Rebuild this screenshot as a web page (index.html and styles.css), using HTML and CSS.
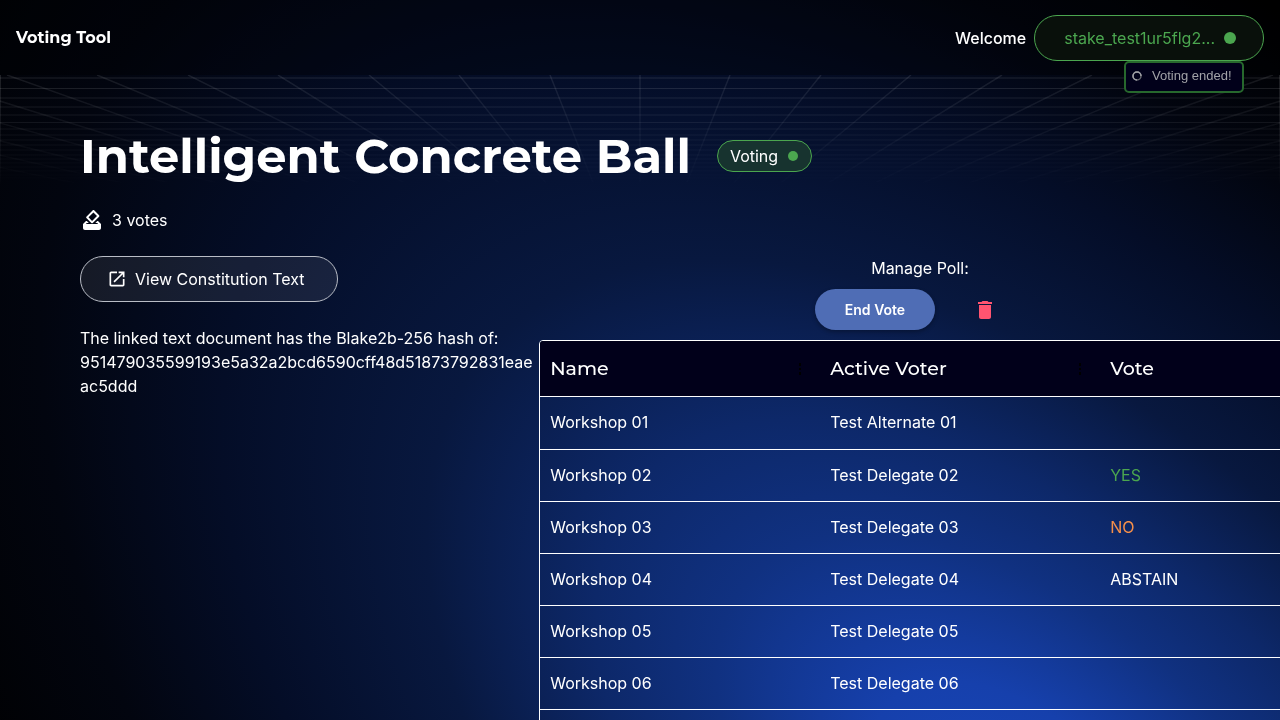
FILE: index.html
```html
<!DOCTYPE html>
<html lang="en">
<head>
<meta charset="utf-8">
<title>Voting Tool</title>
<link rel="stylesheet" href="styles.css">
</head>
<body>
<svg class="glow" viewBox="0 0 1280 720" preserveAspectRatio="none" aria-hidden="true">
  <defs>
    <radialGradient id="glow" gradientUnits="userSpaceOnUse" cx="0" cy="0" r="1" gradientTransform="translate(1030 830) rotate(-138) scale(1450 810)">
      <stop offset="0" stop-color="#1847bc"/>
      <stop offset=".13" stop-color="#1640ac"/>
      <stop offset=".26" stop-color="#103181"/>
      <stop offset=".36" stop-color="#0d2869"/>
      <stop offset=".5" stop-color="#08183f"/>
      <stop offset=".67" stop-color="#040d27"/>
      <stop offset=".82" stop-color="#02050f"/>
      <stop offset="1" stop-color="#000"/>
    </radialGradient>
  </defs>
  <rect width="1280" height="720" fill="url(#glow)"/>
</svg>
<header class="topbar">
  <a class="brand" href="#">Voting Tool</a>
  <div class="account">
    <span class="welcome">Welcome</span>
    <button class="wallet" type="button">stake_test1ur5flg2...<span class="dot dot-large"></span></button>
    <div class="toast" role="status">
      <svg width="10" height="10" viewBox="0 0 10 10" aria-hidden="true"><circle cx="5" cy="5" r="4" fill="none" stroke="#66666e" stroke-width="1.500"/><path d="M5 9A4 4 0 1 1 9 5" fill="none" stroke="#a0a0a6" stroke-width="1.500"/></svg>
      <span>Voting ended!</span>
    </div>
  </div>
</header>
<div class="canvas">
  <svg class="grid" viewBox="0 0 1280 115" preserveAspectRatio="none" aria-hidden="true">
    <defs>
      <linearGradient id="fade" x1="0" y1="0" x2="0" y2="1"><stop offset="0" stop-color="#fff"/><stop offset="1" stop-color="#000"/></linearGradient>
      <mask id="fadeMask"><rect width="1280" height="115" fill="url(#fade)"/></mask>
    </defs>
    <g mask="url(#fadeMask)" fill="none" stroke="#fff" stroke-opacity=".09">
      <path stroke-opacity=".12" d="M0 3H1280M0 13.500H1280M0 23H1280M0 32H1280M0 40H1280M0 47.500H1280M0 54H1280M0 60H1280M0 65H1280M0 70H1280M0 75H1280M0 80H1280M0 84H1280M0 88H1280M0 92H1280M0 96H1280M0 100H1280M0 103H1280M0 106H1280M.5 0V115M1279.500 0V115"/>
      <path stroke-width="1.500" d="M640 0V115M550 0L640 225L730 0M459 0L640 225L821 0M369 0L640 225L911 0M278 0L640 225L1002 0M188 0L640 225L1092 0M97 0L640 225L1183 0M7 0L640 225L1273 0M-84 0L640 225L1364 0M-174 0L640 225L1454 0M-265 0L640 225L1545 0M-355 0L640 225L1635 0M-446 0L640 225L1726 0"/>
    </g>
  </svg>
  <main class="page">
    <div class="heading">
      <h1>Intelligent Concrete Ball</h1>
      <span class="chip">Voting<span class="dot"></span></span>
    </div>
    <div class="votes">
      <svg width="24" height="24" viewBox="0 0 24 24" fill="#fff" aria-hidden="true"><path d="M18 13h-.68l-2 2h1.910L19 17H5l1.780-2h2.050l-2-2H6l-3 3v4c0 1.100.89 2 1.990 2H19c1.100 0 2-.89 2-2v-4l-3-3zm-1-5.050l-4.950 4.950-3.540-3.540 4.950-4.950L17 7.950zm-4.240-5.660L6.390 8.660c-.39.39-.39 1.020 0 1.410l4.950 4.950c.39.39 1.020.39 1.410 0l6.360-6.360c.39-.39.39-1.020 0-1.410L14.160 2.300c-.38-.4-1.010-.4-1.400-.01z"/><path d="M3 16h18v4H3z"/></svg>
      <span>3 votes</span>
    </div>
    <div class="columns">
      <section class="document">
        <button class="outlined" type="button">
          <svg width="20" height="20" viewBox="0 0 24 24" fill="#fff" aria-hidden="true"><path d="M19 19H5V5h7V3H5c-1.110 0-2 .9-2 2v14c0 1.100.89 2 2 2h14c1.100 0 2-.9 2-2v-7h-2v7zM14 3v2h3.590l-9.830 9.830 1.410 1.410L19 6.410V10h2V3h-7z"/></svg>
          View Constitution Text
        </button>
        <p class="hash">The linked text document has the Blake2b-256 hash of:<br>951479035599193e5a32a2bcd6590cff48d51873792831eae<br>ac5ddd</p>
      </section>
      <section class="poll">
        <p class="manage">Manage Poll:</p>
        <div class="actions">
          <button class="end" type="button">End Vote</button>
          <button class="delete" type="button" aria-label="Delete poll"><svg width="24" height="24" viewBox="0 0 24 24" fill="#ff5470" aria-hidden="true"><path d="M6 19c0 1.100.9 2 2 2h8c1.100 0 2-.9 2-2V7H6v12zM19 4h-3.500l-1-1h-5l-1 1H5v2h14V4z"/></svg></button>
        </div>
        <table class="voters">
          <thead><tr>
            <th><div class="th">Name<svg width="24" height="24" viewBox="0 0 24 24" aria-hidden="true"><path d="M11 6h2v3h-2zM11 11h2v2h-2zM11 15h2v3h-2z"/></svg></div></th>
            <th><div class="th">Active Voter<svg width="24" height="24" viewBox="0 0 24 24" aria-hidden="true"><path d="M11 6h2v3h-2zM11 11h2v2h-2zM11 15h2v3h-2z"/></svg></div></th>
            <th><div class="th">Vote</div></th>
          </tr></thead>
          <tbody>
            <tr><td>Workshop 01</td><td>Test Alternate 01</td><td></td></tr>
            <tr><td>Workshop 02</td><td>Test Delegate 02</td><td class="yes">YES</td></tr>
            <tr><td>Workshop 03</td><td>Test Delegate 03</td><td class="no">NO</td></tr>
            <tr><td>Workshop 04</td><td>Test Delegate 04</td><td>ABSTAIN</td></tr>
            <tr><td>Workshop 05</td><td>Test Delegate 05</td><td></td></tr>
            <tr><td>Workshop 06</td><td>Test Delegate 06</td><td></td></tr>
            <tr><td></td><td></td><td></td></tr>
          </tbody>
        </table>
      </section>
    </div>
  </main>
</div>
</body>
</html>
```
FILE: styles.css
```css
* { box-sizing: border-box; }
html { background: #000; height: 100%; overflow: hidden; }
body { margin: 0; height: 100%; overflow: hidden; color: #fff; font: 16px/24px Inter, sans-serif; }
h1, p { margin: 0; }
button { font: inherit; color: inherit; cursor: pointer; }
.glow { position: fixed; inset: 0; width: 100%; height: 100%; z-index: -1; }
.topbar { position: relative; z-index: 2; display: flex; align-items: center; justify-content: space-between; padding: 15px 16px 14px; background: rgba(0, 0, 0, .3); }
.brand { color: #fff; text-decoration: none; font-family: Montserrat, Inter, sans-serif; font-weight: 700; }
.account { position: relative; display: flex; align-items: center; gap: 8px; }
.welcome { font-weight: 500; }
.wallet { display: flex; align-items: center; gap: 9px; height: 46px; padding: 0 27px 0 29px; border: 1px solid #4ba64f; border-radius: 23px; background: #09100b; color: #4ba64f; }
.dot { width: 10px; height: 10px; border-radius: 50%; background: #4ba64f; }
.dot-large { width: 12px; height: 12px; }
.toast { position: absolute; top: 100%; right: 20px; display: flex; align-items: center; gap: 10px; width: 120px; height: 32px; padding: 0 6px 2px; border: 2px solid #27682d; border-radius: 5px; background: #01001a; color: #a2a2a8; font: 13px/16px "Liberation Sans", sans-serif; white-space: nowrap; }
.canvas { position: relative; }
.grid { position: absolute; top: 0; left: 0; width: 100%; height: 115px; }
.page { position: relative; padding: 52px 80px 0; }
.heading { display: flex; align-items: center; gap: 26px; }
h1 { font: 700 48px/58px Montserrat, Inter, sans-serif; }
.chip { display: flex; align-items: center; gap: 10px; height: 32px; padding: 0 13px 0 12px; border: 1px solid #4ba64f; border-radius: 16px; background: #17332f; }
.votes { display: flex; align-items: center; gap: 8px; margin-top: 23px; }
.columns { display: grid; grid-template-columns: 41% 68%; margin-top: 24px; }
.outlined { display: flex; align-items: center; gap: 8px; height: 46px; padding: 0 32px 0 26px; border: 1px solid #b9bdc6; border-radius: 23px; background: rgba(255, 255, 255, .08); }
.hash { margin-top: 24px; white-space: nowrap; }
.poll { position: relative; }
.manage { text-align: center; }
.actions { display: flex; justify-content: center; align-items: center; gap: 10px; margin: 9px 0 10px; }
.end { height: 41px; padding: 0 30px; border: 0; border-radius: 21px; background: #4f6db5; font-size: 14px; font-weight: 600; box-shadow: 0 2px 4px rgba(0, 0, 0, .3); }
.delete { display: flex; justify-content: center; width: 80px; padding: 8px; border: 0; background: none; }
.voters { width: 842px; table-layout: fixed; border: 1px solid #fff; border-radius: 4px; border-spacing: 0; overflow: hidden; }
th { height: 56px; padding: 0 8px 0 10px; border-bottom: 1px solid #fff; background: #01001a; font: 500 19px/24px Montserrat, Inter, sans-serif; text-align: left; }
.th { display: flex; justify-content: space-between; }
td { height: 52px; padding: 0 10px 2px; }
tr + tr td { border-top: 1px solid #fff; }
.yes { color: #4ba64f; }
.no { color: #f58f4a; }
```
